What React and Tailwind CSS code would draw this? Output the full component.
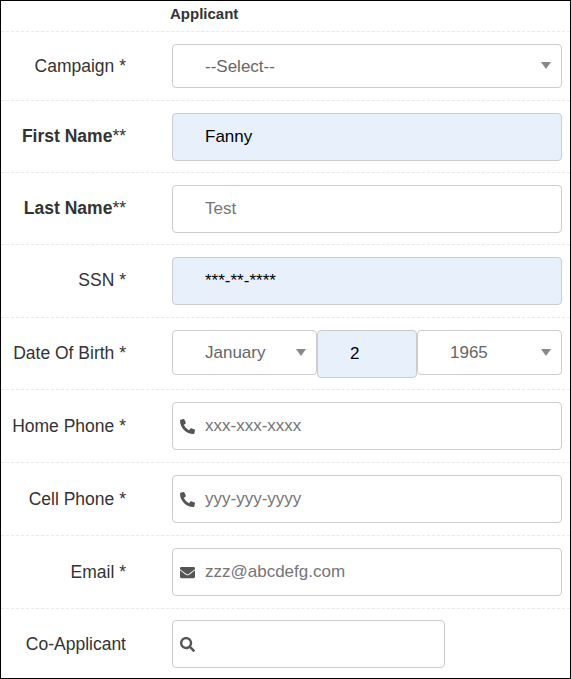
import { FaEnvelope, FaPhoneAlt, FaSearch } from "react-icons/fa";

const Caret = () => (
  <span className="absolute right-[10px] top-1/2 -mt-[4px] h-0 w-0 border-x-[5px] border-t-[7px] border-x-transparent border-t-[#888]" />
);

const Row = ({ label, bold, stars, className, labelClass = "", children }) => (
  <div className={`flex items-center border-b border-dashed border-[#e8e8e8] pr-2 ${className}`}>
    <label className={`w-[125px] shrink-0 text-right text-[17.5px] leading-[22px] text-[#333] ${labelClass}`}>
      {bold ? <b className="font-bold">{label}</b> : label}
      {stars}
    </label>
    <div className="ml-[46px] flex min-w-0 flex-1">{children}</div>
  </div>
);

const Select = ({ value, className }) => (
  <div className={`relative flex items-center rounded border border-[#ccc] bg-white pl-8 text-[17px] text-[#666] ${className}`}>
    {value}
    <Caret />
  </div>
);

const Input = ({ value, filled, dark, icon, className = "w-full" }) => (
  <div className={`flex h-12 items-center rounded border border-[#ccc] text-[17px] ${filled ? "bg-[#e8f0fc]" : "bg-white"} ${dark ? "text-black" : "text-[#757575]"} ${className}`}>
    <span className="flex w-8 shrink-0 pl-[7px] text-[15px] text-[#555]">{icon}</span>
    {value}
  </div>
);

export default function App() {
  return (
    <div className="h-[679px] w-[571px] bg-white [font-family:'Liberation_Sans',Arial,sans-serif]">
      <div className="h-[679px] overflow-hidden border border-black">
        <div className="h-[31px] border-b border-dashed border-[#e8e8e8] pl-[169px] pt-[4px] text-[15px] font-bold leading-[18px] text-[#333]">
          Applicant
        </div>

        <Row label="Campaign" stars=" *" className="pt-3 pb-3">
          <Select value="--Select--" className="h-11 w-full pt-[2px]" />
        </Row>
        <Row label="First Name" bold stars="**" className="pt-3 pb-[11px]" labelClass="mb-[2px]">
          <Input value="Fanny" filled dark />
        </Row>
        <Row label="Last Name" bold stars="**" className="pt-3 pb-[11px]" labelClass="mb-[2px]">
          <Input value="Test" />
        </Row>
        <Row label="SSN" stars=" *" className="pt-3 pb-3" labelClass="mb-[2px]">
          <Input value="***-**-****" filled dark />
        </Row>
        <Row label="Date Of Birth" stars=" *" className="pt-3 pb-[11px]" labelClass="mb-[2px]">
          <div className="flex h-12 w-full items-start">
            <Select value="January" className="h-[45px] w-[145px]" />
            <div className="flex h-12 w-[100px] items-center rounded border border-[#ccc] bg-[#e8f0fc] pl-8 text-[17px] text-black">2</div>
            <Select value="1965" className="h-[45px] flex-1" />
          </div>
        </Row>
        <Row label="Home Phone" stars=" *" className="pt-3 pb-3">
          <Input value="xxx-xxx-xxxx" icon={<FaPhoneAlt />} />
        </Row>
        <Row label="Cell Phone" stars=" *" className="pt-3 pb-3">
          <Input value="yyy-yyy-yyyy" icon={<FaPhoneAlt />} />
        </Row>
        <Row label="Email" stars=" *" className="pt-3 pb-3">
          <Input value="zzz@abcdefg.com" icon={<FaEnvelope />} />
        </Row>
        <div className="flex items-center pt-[11px]">
          <label className="w-[125px] shrink-0 text-right text-[17.5px] leading-[22px] text-[#333]">Co-Applicant</label>
          <div className="ml-[46px]">
            <Input value="" icon={<FaSearch />} className="w-[273px]" />
          </div>
        </div>
      </div>
    </div>
  );
}
